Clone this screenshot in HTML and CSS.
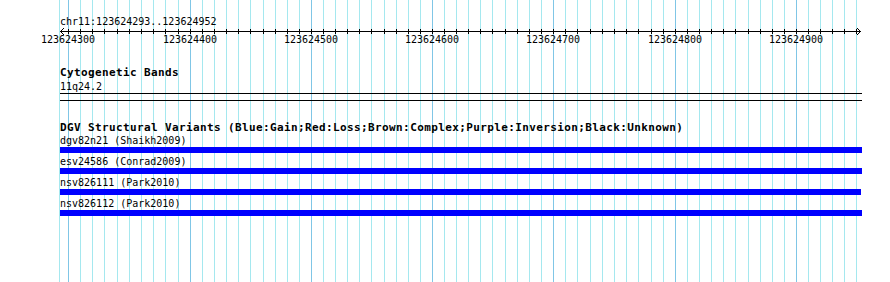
FILE: index.html
```html
<!DOCTYPE html>
<html lang="en">
<head>
    <meta charset="UTF-8">
    <title>chr11:123624293..123624952</title>
    <link rel="stylesheet" href="styles.css">
</head>
<body>

    <div class="view">
        <!-- grid: one line every 10 bp, darker every 100 bp -->
        <svg class="grid" width="890" height="282">
            <path class="minor" d="M59.5 0V282M80.5 0V282M92.5 0V282M104.5 0V282M117.5 0V282M129.5 0V282M141.5 0V282M153.5 0V282M165.5 0V282M178.5 0V282M202.5 0V282M214.5 0V282M226.5 0V282M238.5 0V282M250.5 0V282M263.5 0V282M275.5 0V282M287.5 0V282M299.5 0V282M323.5 0V282M335.5 0V282M347.5 0V282M359.5 0V282M371.5 0V282M384.5 0V282M396.5 0V282M408.5 0V282M420.5 0V282M444.5 0V282M456.5 0V282M468.5 0V282M480.5 0V282M492.5 0V282M505.5 0V282M517.5 0V282M529.5 0V282M541.5 0V282M565.5 0V282M577.5 0V282M590.5 0V282M602.5 0V282M614.5 0V282M626.5 0V282M638.5 0V282M651.5 0V282M663.5 0V282M687.5 0V282M699.5 0V282M711.5 0V282M723.5 0V282M735.5 0V282M748.5 0V282M760.5 0V282M772.5 0V282M784.5 0V282M808.5 0V282M820.5 0V282M832.5 0V282M844.5 0V282M856.5 0V282"/>
            <path class="major" d="M68.5 0V282M190.5 0V282M311.5 0V282M432.5 0V282M553.5 0V282M675.5 0V282M796.5 0V282"/>
        </svg>

        <div class="tracks">
            <div class="locus">chr11:123624293..123624952</div>

            <svg class="ruler" width="890" height="18" viewBox="0 28 890 18">
                <path class="axis" d="M60 31.5H861"/>
                <path class="axis" d="M68.5 29V34M80.5 29V34M92.5 29V34M104.5 29V34M117.5 29V34M129.5 29V34M141.5 29V34M153.5 29V34M165.5 29V34M178.5 29V34M190.5 29V34M202.5 29V34M214.5 29V34M226.5 29V34M238.5 29V34M250.5 29V34M263.5 29V34M275.5 29V34M287.5 29V34M299.5 29V34M311.5 29V34M323.5 29V34M335.5 29V34M347.5 29V34M359.5 29V34M371.5 29V34M384.5 29V34M396.5 29V34M408.5 29V34M420.5 29V34M432.5 29V34M444.5 29V34M456.5 29V34M468.5 29V34M480.5 29V34M492.5 29V34M505.5 29V34M517.5 29V34M529.5 29V34M541.5 29V34M553.5 29V34M565.5 29V34M577.5 29V34M590.5 29V34M602.5 29V34M614.5 29V34M626.5 29V34M638.5 29V34M651.5 29V34M663.5 29V34M675.5 29V34M687.5 29V34M699.5 29V34M711.5 29V34M723.5 29V34M735.5 29V34M748.5 29V34M760.5 29V34M772.5 29V34M784.5 29V34M796.5 29V34M808.5 29V34M820.5 29V34M832.5 29V34M844.5 29V34M856.5 29V34"/>
                <path class="arrow" d="M64 28L60.5 31.5L64 35M857 28L860.5 31.5L857 35"/>
                <text x="68" y="43">123624300</text>
                <text x="190" y="43">123624400</text>
                <text x="311" y="43">123624500</text>
                <text x="432" y="43">123624600</text>
                <text x="553" y="43">123624700</text>
                <text x="675" y="43">123624800</text>
                <text x="796" y="43">123624900</text>
            </svg>

            <section class="track cyto">
                <div class="track-title">Cytogenetic Bands</div>
                <div class="feature-label">11q24.2</div>
                <div class="band"></div>
            </section>

            <section class="track dgv">
                <div class="track-title">DGV Structural Variants (Blue:Gain;Red:Loss;Brown:Complex;Purple:Inversion;Black:Unknown)</div>
                <div class="feature">
                    <div class="feature-label">dgv82n21 (Shaikh2009)</div>
                    <div class="bar"></div>
                </div>
                <div class="feature">
                    <div class="feature-label">esv24586 (Conrad2009)</div>
                    <div class="bar"></div>
                </div>
                <div class="feature">
                    <div class="feature-label">nsv826111 (Park2010)</div>
                    <div class="bar" style="width: 801px;"></div>
                </div>
                <div class="feature">
                    <div class="feature-label">nsv826112 (Park2010)</div>
                    <div class="bar"></div>
                </div>
            </section>
        </div>
    </div>

</body>
</html>
```

FILE: styles.css
```css
body {
    margin: 0;
    background: white;
    font-family: "DejaVu Sans Mono", monospace;
    font-size: 10px;
    color: black;
}
.view {
    position: relative;
    width: 890px;
    height: 282px;
    overflow: hidden;
}
.grid {
    position: absolute;
    top: 0;
    left: 0;
    shape-rendering: crispEdges;
}
.grid .minor {
    stroke: #a5e8ef;
    stroke-width: 1;
}
.grid .major {
    stroke: #80c6e6;
    stroke-width: 1;
}
.tracks {
    position: relative;
}
.locus {
    margin-top: 15px;
    padding-left: 60px;
    line-height: 13px;
}
.ruler {
    display: block;
}
.ruler .axis {
    stroke: black;
    stroke-width: 1;
    fill: none;
    shape-rendering: crispEdges;
}
.ruler .arrow {
    stroke: black;
    stroke-width: 1;
    fill: none;
}
.ruler text {
    font-family: "DejaVu Sans Mono", monospace;
    font-size: 10px;
    text-anchor: middle;
    fill: black;
}
.track {
    margin-top: 21px;
    padding-left: 60px;
}
.track-title {
    font-weight: bold;
    font-size: 11px;
    letter-spacing: 0.38px;
    line-height: 12px;
    white-space: nowrap;
}
.feature-label {
    line-height: 13px;
    white-space: nowrap;
}
.cyto .feature-label {
    margin-top: 1px;
}
.band {
    width: 802px;
    height: 6px;
    border-top: 1px solid black;
    border-bottom: 1px solid black;
}
.feature {
    margin-bottom: 2px;
}
.bar {
    width: 802px;
    height: 6px;
    background: #0000ff;
}
```
